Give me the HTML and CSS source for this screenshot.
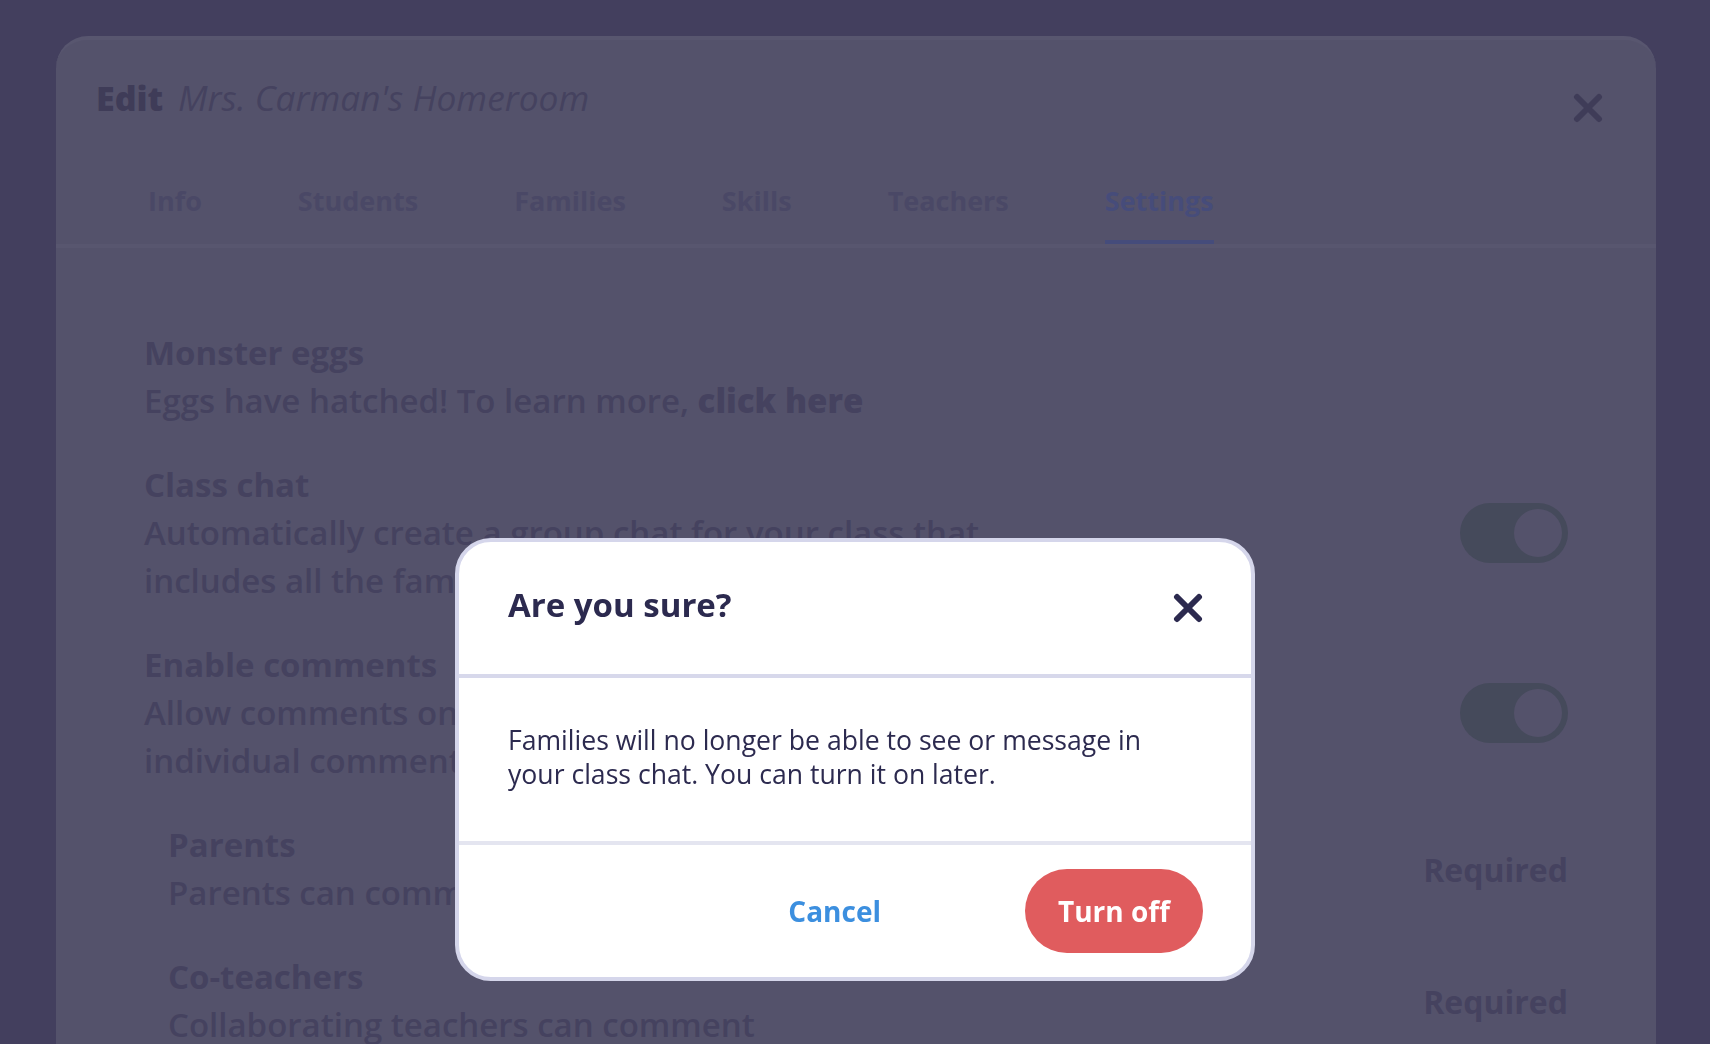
FILE: index.html
```html
<!DOCTYPE html>
<html lang="en">
<head>
  <meta charset="UTF-8">
  <meta name="viewport" content="width=device-width, initial-scale=1.0">
  <title>Edit class - Settings</title>
  <link rel="stylesheet" href="styles.css">
</head>
<body>
  <div class="panel">
    <div class="panel-header">
      <h1 class="panel-title"><b>Edit</b> <i>Mrs. Carman's Homeroom</i></h1>
      <svg class="panel-close" width="32" height="30" viewBox="0 0 32 30">
        <path d="M5 4 L27 26 M27 4 L5 26" />
      </svg>
    </div>

    <div class="tabs">
      <div class="tab">Info</div>
      <div class="tab">Students</div>
      <div class="tab">Families</div>
      <div class="tab">Skills</div>
      <div class="tab">Teachers</div>
      <div class="tab tab-active">Settings</div>
    </div>

    <div class="settings">
      <div class="setting">
        <div class="setting-text">
          <div class="setting-name">Monster eggs</div>
          <div class="setting-desc">Eggs have hatched! To learn more, <b>click here</b></div>
        </div>
      </div>

      <div class="setting">
        <div class="setting-text">
          <div class="setting-name">Class chat</div>
          <div class="setting-desc">Automatically create a group chat for your class that<br>includes all the families in your class</div>
        </div>
        <div class="toggle"></div>
      </div>

      <div class="setting">
        <div class="setting-text">
          <div class="setting-name">Enable comments</div>
          <div class="setting-desc">Allow comments on posts and stories. You can turn<br>individual comments off on each post</div>
        </div>
        <div class="toggle"></div>
      </div>

      <div class="setting setting-sub">
        <div class="setting-text">
          <div class="setting-name">Parents</div>
          <div class="setting-desc">Parents can comment on posts</div>
        </div>
        <div class="setting-value">Required</div>
      </div>

      <div class="setting setting-sub">
        <div class="setting-text">
          <div class="setting-name">Co-teachers</div>
          <div class="setting-desc">Collaborating teachers can comment</div>
        </div>
        <div class="setting-value">Required</div>
      </div>
    </div>
  </div>

  <!-- Confirm dialog -->
  <div class="overlay">
    <div class="modal">
      <div class="modal-header">
        <h2 class="modal-title">Are you sure?</h2>
        <svg class="modal-close" width="30" height="30" viewBox="0 0 30 30">
          <path d="M4 4 L26 26 M26 4 L4 26" />
        </svg>
      </div>
      <div class="modal-body">
        <p>Families will no longer be able to see or message in<br>your class chat. You can turn it on later.</p>
      </div>
      <div class="modal-footer">
        <button class="btn btn-cancel">Cancel</button>
        <button class="btn btn-danger">Turn off</button>
      </div>
    </div>
  </div>
</body>
</html>
```

FILE: styles.css
```css
body {
  margin: 0;
  padding: 0;
  background: #433f5e;
  font-family: "Open Sans", "Noto Sans", sans-serif;
  color: #45425f;
  overflow: hidden;
  height: 100vh;
}

.panel {
  box-sizing: border-box;
  width: 1600px;
  min-height: calc(100vh - 36px);
  margin: 36px 0 0 56px;
  background: #54526b;
  border-top: 4px solid #58566f;
  border-radius: 32px 32px 0 0;
}

.panel-header {
  display: flex;
  justify-content: space-between;
  align-items: flex-start;
  padding: 37px 52px 0 40px;
}

.panel-title {
  margin: 0;
  font-size: 34px;
  line-height: 40px;
  font-weight: 400;
  color: #45425f;
}

.panel-title b {
  font-weight: 800;
  color: #3f3c58;
  margin-right: 6px;
}

.panel-title i {
  font-size: 35.3px;
  font-weight: 400;
}

.panel-close {
  margin-top: 16px;
}

.panel-close path {
  stroke: #3f3c58;
  stroke-width: 6;
  stroke-linecap: round;
  fill: none;
}

.tabs {
  display: flex;
  gap: 96px;
  margin-top: 62px;
  padding-left: 92px;
  border-bottom: 4px solid #58566f;
}

.tab {
  font-size: 27px;
  line-height: 32px;
  font-weight: 700;
  color: #4a4866;
  padding-bottom: 23px;
  border-bottom: 4px solid transparent;
}

.tab-active {
  color: #464c7a;
  border-bottom-color: #454c7b;
}

.settings {
  display: flex;
  flex-direction: column;
  gap: 36px;
  padding: 81px 88px 0 88px;
}

.setting {
  display: flex;
  justify-content: space-between;
  align-items: center;
}

.setting-sub {
  margin-left: 24px;
}

.setting-name {
  font-size: 33px;
  line-height: 48px;
  font-weight: 700;
}

.setting-desc {
  font-size: 33px;
  line-height: 48px;
  font-weight: 600;
}

.setting-desc b {
  font-weight: 800;
}

.setting-value {
  font-size: 32px;
  font-weight: 700;
}

.toggle {
  position: relative;
  width: 108px;
  height: 60px;
  border-radius: 30px;
  background: #454a5b;
}

.toggle::after {
  content: '';
  position: absolute;
  top: 6px;
  right: 6px;
  width: 48px;
  height: 48px;
  border-radius: 50%;
  background: #54526b;
}

.overlay {
  position: fixed;
  top: 0;
  left: 0;
  right: 0;
  bottom: 0;
  display: flex;
  justify-content: center;
  align-items: flex-start;
  padding-top: 538px;
}

.modal {
  box-sizing: border-box;
  width: 800px;
  background: #fff;
  border: 4px solid #d5d6eb;
  border-radius: 36px;
  color: #2c2a4f;
  overflow: hidden;
}

.modal-header {
  height: 132px;
  display: flex;
  justify-content: space-between;
  align-items: center;
  padding: 0 48px 0 49px;
  border-bottom: 4px solid #d7d8eb;
}

.modal-title {
  margin: -6px 0 0 0;
  font-size: 33px;
  line-height: 40px;
  font-weight: 700;
}

.modal-close path {
  stroke: #2c2a4f;
  stroke-width: 6;
  stroke-linecap: round;
  fill: none;
}

.modal-body {
  box-sizing: border-box;
  height: 167px;
  display: flex;
  align-items: center;
  padding: 0 49px 6px 49px;
  border-bottom: 4px solid #e4e5f0;
}

.modal-body p {
  margin: 0;
  font-size: 26.6px;
  line-height: 34px;
}

.modal-footer {
  height: 132px;
  display: flex;
  justify-content: flex-end;
  align-items: center;
  gap: 111px;
  padding-right: 48px;
}

.btn {
  font-family: inherit;
  font-size: 28px;
  font-weight: 700;
  height: 84px;
  padding: 0 33px;
  border: none;
  border-radius: 42px;
  cursor: pointer;
}

.btn-cancel {
  background: transparent;
  color: #3c8fdf;
}

.btn-danger {
  background: #e05c5e;
  color: #fff;
}
```
